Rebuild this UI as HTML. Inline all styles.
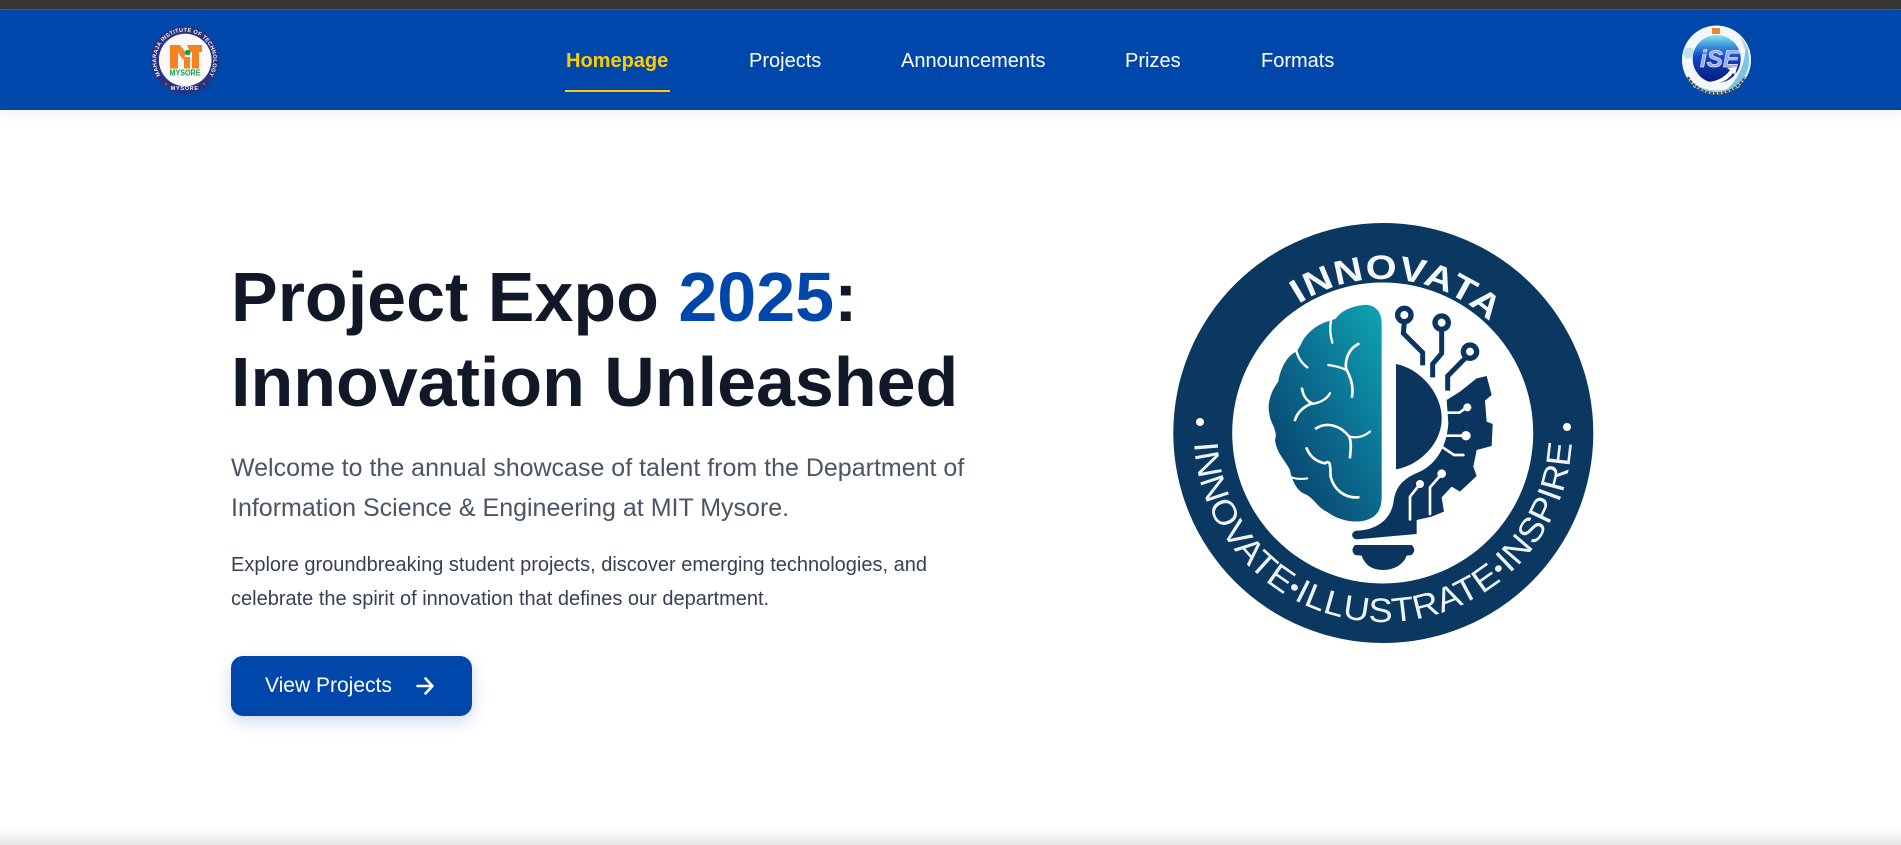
<!DOCTYPE html>
<html><head><meta charset="utf-8"><title>Project Expo 2025</title>
<style>
*{box-sizing:border-box;margin:0;padding:0}
html,body{width:1901px;height:845px;overflow:hidden;background:#fff;font-family:"Liberation Sans",Arial,sans-serif}
.top{position:absolute;left:0;top:0;width:1901px;height:10px;background:#363636;border-bottom:1px solid #4a5a70}
nav{position:absolute;left:0;top:10px;width:1901px;height:100px;background:#0047ab;box-shadow:0 4px 12px rgba(0,0,0,.06)}
nav a{position:absolute;top:40px;font-size:20px;line-height:23px;color:#fff;white-space:nowrap}
nav a.on{color:#ffcc00;font-weight:bold}
.ul{position:absolute;left:565px;top:80px;width:105px;height:2px;background:#ffcc00}
h1{position:absolute;left:231px;top:255px;font-size:70px;line-height:85px;font-weight:bold;color:#111827;white-space:nowrap}
h1 span{color:#0047ab}
.p1{position:absolute;left:231px;top:448px;font-size:25px;line-height:40px;color:#4b5563;white-space:nowrap}
.p2{position:absolute;left:231px;top:548px;font-size:20px;line-height:34px;color:#374151;white-space:nowrap}
.btn{position:absolute;left:231px;top:656px;width:241px;height:60px;background:#0047ab;border-radius:12px;box-shadow:0 6px 16px rgba(0,71,171,.2);color:#fff;font-size:21px;line-height:60px;padding-left:34px}
.btn svg{position:absolute;left:185px;top:21px}
.bottom{position:absolute;left:0;top:825px;width:1901px;height:20px;background:linear-gradient(#fff,#fafafa 40%,#e6e6e6)}
svg.abs{position:absolute;left:0;top:0}
</style></head><body>
<div class="top"></div>
<nav>
<a class="on" style="left:566px">Homepage</a><div class="ul"></div>
<a style="left:749px">Projects</a>
<a style="left:901px">Announcements</a>
<a style="left:1125px">Prizes</a>
<a style="left:1261px">Formats</a>
</nav>
<h1>Project Expo <span>2025</span>:<br>Innovation Unleashed</h1>
<p class="p1">Welcome to the annual showcase of talent from the Department of<br>Information Science &amp; Engineering at MIT Mysore.</p>
<p class="p2">Explore groundbreaking student projects, discover emerging technologies, and<br>celebrate the spirit of innovation that defines our department.</p>
<div class="btn">View Projects<svg width="18" height="18" viewBox="0 0 18 18" fill="none" stroke="#fff" stroke-width="2.500" stroke-linecap="round" stroke-linejoin="round"><path d="M1.500 9H16.500M9.500 1.500L16.500 9L9.500 16.500"/></svg></div>
<div class="bottom"></div>

<svg class="abs" width="1901" height="845" viewBox="0 0 1901 845">
<defs>
<linearGradient id="br" x1="1" y1="0" x2="0.15" y2="0.9"><stop offset="0" stop-color="#0ea5b3"/><stop offset=".45" stop-color="#0c7595"/><stop offset="1" stop-color="#09406d"/></linearGradient>
<linearGradient id="gl" x1="0" y1="0" x2="0" y2="1"><stop offset="0" stop-color="#8fe6e4"/><stop offset=".2" stop-color="#3f9fe0"/><stop offset=".45" stop-color="#1148c8"/><stop offset="1" stop-color="#06187a"/></linearGradient>
<path id="t1" d="M1229 433A154 154 0 0 1 1537 433"/>
<path id="t2" d="M1194 433A189 189 0 0 0 1572 433"/>
<path id="s1" d="M162 77.500A28.500 28.500 0 1 1 207.400 77.500"/>
<path id="s3" d="M1688 77A33 33 0 0 0 1745 77"/>
</defs>

<!-- MIT logo -->
<circle cx="184.700" cy="60" r="33.800" fill="#2a3382"/>
<circle cx="185.200" cy="60" r="26.300" fill="#fbf8f8"/>
<text font-size="5.600" font-weight="bold" fill="#f2f2fa" letter-spacing=".25"><textPath href="#s1" startOffset="50%" text-anchor="middle">MAHARAJA INSTITUTE OF TECHNOLOGY</textPath></text>
<text font-size="5.500" font-weight="bold" fill="#f2f2fa" letter-spacing=".7" text-anchor="middle" x="184.700" y="90">MYSORE</text>
<path d="M170 45H180L186 53L183 60L178 52V68.500H170Z" fill="#f58220"/>
<rect x="184" y="57" width="6" height="11.500" fill="#f58220"/>
<path d="M187 45H202V52H199V68.500H192V52H190Z" fill="#f58220"/>
<circle cx="187.700" cy="52.500" r="2.800" fill="#12a150"/>
<text x="169.500" y="75.700" font-size="8.300" font-weight="bold" fill="#12a150" textLength="31" lengthAdjust="spacingAndGlyphs">MYSORE</text>
<circle cx="166" cy="84" r="1" fill="#e8641b"/><circle cx="204" cy="84" r="1" fill="#e8641b"/>

<!-- ISE logo -->
<circle cx="1716.500" cy="60" r="34.500" fill="#f2f7fa"/>
<path d="M1745 42C1752 58 1750 74 1738 85L1726 90C1738 80 1747 62 1745 42Z" fill="#7fc2e2"/>
<path d="M1740 35L1750 50L1744 48Z" fill="#c3d4de"/>
<path d="M1683 50C1688 46 1695 47 1694 53C1692 60 1686 60 1684 56Z" fill="#bfe0e8"/>
<path d="M1694 84Q1716 97 1739 84L1740 87Q1716 99 1693 87Z" fill="#8fd0e4"/>
<circle cx="1716.700" cy="59" r="24" fill="url(#gl)"/>
<path d="M1706 82C1718 82 1726 76 1730 70L1727 68L1737 67L1735 75L1733 73C1727 82 1716 86 1706 82Z" fill="#fff"/>
<rect x="1712" y="28" width="8" height="6" fill="#e8873a"/>
<text x="1700" y="67" font-size="24" font-style="italic" font-weight="bold" fill="#9aa8ea" stroke="#f1f3ff" stroke-width=".6" textLength="39" lengthAdjust="spacingAndGlyphs">iSE</text>
<use href="#s3" fill="none" stroke="#5f4a40" stroke-width="2.200" stroke-dasharray="3 1"/>

<!-- Innovata badge -->
<circle cx="1383.300" cy="433" r="210" fill="#0b3860"/>
<circle cx="1382.700" cy="433" r="150.500" fill="#fff"/>
<g transform="rotate(5.500 1383 433)"><text font-size="34" font-weight="bold" fill="#f4f8fb" letter-spacing="1"><textPath href="#t1" startOffset="50%" text-anchor="middle" textLength="208" lengthAdjust="spacingAndGlyphs">INNOVATA</textPath></text></g>
<text font-size="34" fill="#eef3f7" letter-spacing=".5"><textPath href="#t2" startOffset="50%" text-anchor="middle" textLength="574" lengthAdjust="spacingAndGlyphs">INNOVATE<tspan font-size="24" dy="-3">•</tspan><tspan dy="3">ILLUSTRATE</tspan><tspan font-size="24" dy="-3">•</tspan><tspan dy="3">INSPIRE</tspan></textPath></text>
<circle cx="1200" cy="422" r="4" fill="#fff"/><circle cx="1567" cy="427" r="4" fill="#fff"/>

<g transform="translate(1260 290) scale(.33333)">
<!-- brain -->
<path d="M365 100C365 60 340 42 310 45C280 48 245 60 228 85L213 92C190 95 140 120 122 165L110 185C80 195 60 240 55 275C35 300 20 340 28 370C30 400 55 420 45 450C50 490 75 510 90 540C95 570 110 600 130 610C160 620 170 650 200 665C240 695 290 700 320 690C350 680 365 660 365 620Z" fill="url(#br)"/>
<g fill="none" stroke="#fff" stroke-linecap="round" stroke-linejoin="round">
<path d="M213 92C208 115 212 140 217 158" stroke-width="7"/>
<path d="M110 185C115 205 128 222 142 232" stroke-width="7"/>
<path d="M295 162C268 175 255 205 258 235C270 260 282 285 276 320" stroke-width="8"/>
<path d="M205 225C225 228 245 232 258 240" stroke-width="7"/>
<path d="M126 296C130 320 140 332 156 340C130 350 112 368 105 390" stroke-width="8"/>
<path d="M210 310C200 328 180 338 156 342" stroke-width="7"/>
<path d="M168 415C200 395 240 405 268 440C275 460 272 480 270 502" stroke-width="8"/>
<path d="M268 440C290 445 312 440 330 425" stroke-width="7"/>
<path d="M140 475C150 500 170 515 195 520C215 505 210 540 212 560C222 600 255 625 295 622" stroke-width="8"/>
<path d="M90 560C105 567 125 568 142 565" stroke-width="6"/>
</g>
<!-- half bulb -->
<path d="M408 222C480 235 545 310 545 385C545 460 480 525 408 538Z" fill="#0b355e"/>
<!-- gear & bulb -->
<path d="M560 330L600 305L650 265L680 258L695 315L675 332L680 395L698 402L695 468L650 480L640 530L650 558L600 605L575 590L545 622L552 665L515 680L470 690L470 732L290 748C272 745 272 725 290 722C350 720 390 690 400 640C405 590 430 565 480 545C530 520 560 470 565 400Z" fill="#0b355e"/>
<path d="M285 765L455 765Q470 780 455 795L440 797C430 825 400 840 370 840C335 840 315 825 305 797L285 795Q270 780 285 765Z" fill="#0b355e"/>
<!-- white ring around half bulb -->
<path d="M395 548C480 540 556 470 556 385C556 340 548 320 533 290" fill="none" stroke="#fff" stroke-width="12"/>
<g fill="none" stroke="#fff" stroke-width="8" stroke-linecap="round" stroke-linejoin="round">
<path d="M560 368H598L620 352"/>
<path d="M552 437H618"/>
<path d="M548 472L582 495H610"/>
<path d="M545 552L510 592V672"/>
<path d="M480 582L450 620V688"/>
</g>
<g fill="#fff"><circle cx="622" cy="352" r="12"/><circle cx="618" cy="437" r="14"/><circle cx="545" cy="551" r="13"/><circle cx="480" cy="582" r="12"/></g>
<!-- circuits -->
<g fill="none" stroke="#0b355e" stroke-width="15" stroke-linejoin="miter">
<path d="M433 97L430 130L488 188V226"/>
<path d="M545 120V190L518 222V262"/>
<path d="M615 205L563 258V302"/>
</g>
<g fill="#fff" stroke="#0b355e" stroke-width="16"><circle cx="433" cy="75" r="20"/><circle cx="545" cy="98" r="20"/><circle cx="630" cy="185" r="20"/></g>
</g>
</svg>
</body></html>
